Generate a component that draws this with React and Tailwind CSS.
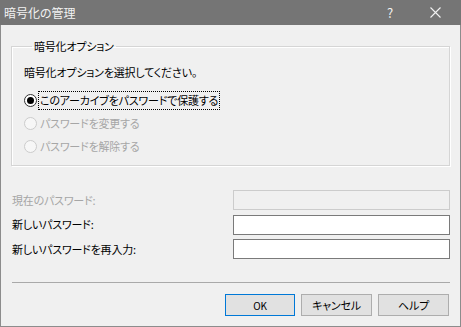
import React from 'react';

const font = "font-['Meiryo_UI','Noto_Sans_CJK_JP','Noto_Sans',sans-serif] [font-feature-settings:'palt']";

function Radio({ checked, disabled, label, focused }) {
  return (
    <label className="flex items-center h-[21px]">
      <span
        className={`w-[13px] h-[13px] rounded-full border flex items-center justify-center ${
          disabled ? 'border-[#cccccc] bg-[#f7f7f7]' : 'border-[#333333] bg-white'
        }`}
      >
        {checked && <span className="w-[7px] h-[7px] rounded-full bg-[#000]" />}
      </span>
      <span
        className={`ml-[1px] px-[1px] leading-[17px] ${
          focused ? 'border border-dotted border-[#000]' : 'border border-transparent'
        } ${disabled ? 'text-[#a6a6a6]' : 'text-black'}`}
      >
        {label}
      </span>
    </label>
  );
}

function Field({ label, disabled }) {
  return (
    <div className="flex items-center h-[20px]">
      <span className={`w-[221px] ${disabled ? 'text-[#a6a6a6]' : 'text-black'}`}>{label}</span>
      <div
        className={`w-[218px] h-[20px] border ${
          disabled ? 'border-[#cccccc] bg-[#f0f0f0]' : 'border-[#7a7a7a] bg-white'
        }`}
      />
    </div>
  );
}

export default function App() {
  return (
    <div className={`w-[461px] h-[327px] bg-[#f0f0f0] flex flex-col text-[11px] tracking-[-0.2px] ${font}`}>
      <div className="h-[25px] bg-[#757575] flex items-center pl-[4px] text-[#f2f2f2] text-[12px] tracking-normal">
        <span className="flex-1">暗号化の管理</span>
        <span className="w-[20px] text-center mr-[30px] text-[13px]">?</span>
        <svg width="11" height="11" viewBox="0 0 11 11" className="mr-[20px]">
          <path d="M0.5 0.5L10.5 10.5M10.5 0.5L0.5 10.5" stroke="#f2f2f2" strokeWidth="1.1" />
        </svg>
      </div>
      <div className="flex-1 flex flex-col border-x border-b border-[#8c8c8c] px-[10px]">
        <fieldset className="mt-[13px] h-[128px] border border-[#d5d5d5] shadow-[1px_1px_0_#ffffff,inset_1px_1px_0_#ffffff] px-[12px]">
          <legend className="ml-[8px] px-[2px] leading-[16px]">暗号化オプション</legend>
          <div className="mt-[10px] leading-[16px]">暗号化オプションを選択してください。</div>
          <div className="mt-[10px] flex flex-col gap-[2px]">
            <Radio checked focused label="このアーカイブをパスワードで保護する" />
            <Radio disabled label="パスワードを変更する" />
            <Radio disabled label="パスワードを解除する" />
          </div>
        </fieldset>
        <div className="mt-[24px] flex flex-col gap-[4.5px] pl-[1px]">
          <Field disabled label="現在のパスワード:" />
          <Field label="新しいパスワード:" />
          <Field label="新しいパスワードを再入力:" />
        </div>
        <div className="mt-[23px] ml-[1px] h-px bg-[#a9a9a9]" />
        <div className="mt-[11px] flex justify-end gap-[6px] pr-[1px]">
          <button className="w-[70px] h-[22px] border border-[#0078d7] bg-[#e1e1e1] text-[10px] text-black">
            OK
          </button>
          <button className="w-[71px] h-[22px] border border-[#adadad] bg-[#e1e1e1] text-black">
            キャンセル
          </button>
          <button className="w-[71px] h-[22px] border border-[#adadad] bg-[#e1e1e1] text-black">
            ヘルプ
          </button>
        </div>
      </div>
    </div>
  );
}
